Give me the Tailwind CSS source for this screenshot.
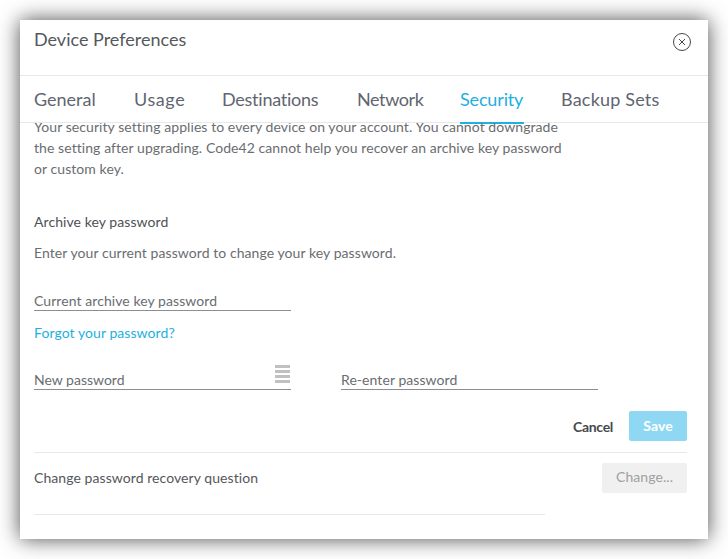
<!DOCTYPE html>
<html>
<head>
  <meta charset="UTF-8">
  <title>Device Preferences</title>
  <script src="https://cdn.jsdelivr.net/npm/@tailwindcss/browser@4"></script>
</head>
<body class="bg-white w-[728px] h-[559px] overflow-hidden font-['Lato',sans-serif] text-[#6a6d71]">
  <div class="pt-[20px] pl-[20px]">
    <div class="w-[688px] h-[519px] bg-white shadow-[0_0_20px_rgba(0,0,0,0.7)] flex flex-col overflow-hidden">

      <!-- header -->
      <div class="h-[56px] shrink-0 border-b border-[#e8e8e8] flex justify-between pl-[14px] pr-[16px] pt-[7px]">
        <h2 class="text-[18px] leading-[24px] text-[#55585c]">Device Preferences</h2>
        <svg class="mt-[5px]" width="20" height="20" viewBox="0 0 20 20" fill="none" stroke="#44474b">
          <circle cx="10" cy="10" r="8.5"/>
          <path d="M7 7l6 6M13 7l-6 6"/>
        </svg>
      </div>

      <!-- tabs -->
      <div class="h-[47px] shrink-0 border-b border-[#e8e8e8] flex gap-[37px] pl-[14px] text-[18px] text-[#5f6570] whitespace-nowrap">
        <div class="w-[63px] pt-[11px] leading-[24px]">General</div>
        <div class="w-[51px] pt-[11px] leading-[24px] tracking-[0.6px]">Usage</div>
        <div class="w-[98px] pt-[11px] leading-[24px] tracking-[-0.25px]">Destinations</div>
        <div class="w-[66px] pt-[11px] leading-[24px] tracking-[-0.4px]">Network</div>
        <div class="w-[64px] pt-[11px] leading-[24px] h-[48px] border-b-2 border-[#1eb0e0] text-[#1eb0e0] tracking-[-0.15px]">Security</div>
        <div class="w-[98px] pt-[11px] leading-[24px] tracking-[0.2px]">Backup Sets</div>
      </div>

      <!-- scrolled content -->
      <div class="flex-1 overflow-hidden pl-[14px] pr-[21px] text-[14px] tracking-[0.07px]">
        <p class="-mt-[7px] leading-[21px] whitespace-nowrap">Your security setting applies to every device on your account. You cannot downgrade<br>the setting after upgrading. Code42 cannot help you recover an archive key password<br>or custom key.</p>

        <h3 class="mt-[33px] leading-[20px] text-[#4e5155]">Archive key password</h3>
        <p class="mt-[11px] leading-[20px]">Enter your current password to change your key password.</p>

        <div class="mt-[28px] w-[257px] h-[19px] border-b border-[#8e8e8e] box-content leading-[20px]">Current archive key password</div>
        <a class="block mt-[12px] leading-[20px] text-[#1eb0e0]">Forgot your password?</a>

        <div class="mt-[26px] flex gap-[50px]">
          <div class="relative w-[257px] h-[20px] border-b border-[#8e8e8e] box-content leading-[22px] tracking-normal">
            New password
            <div class="absolute right-[1px] -top-[4px] w-[15px] flex flex-col gap-[2px]">
              <div class="h-[3px] bg-[#c0c0c0]"></div>
              <div class="h-[3px] bg-[#c0c0c0]"></div>
              <div class="h-[3px] bg-[#c0c0c0]"></div>
              <div class="h-[3px] bg-[#c0c0c0]"></div>
            </div>
          </div>
          <div class="w-[257px] h-[20px] border-b border-[#8e8e8e] box-content leading-[22px]">Re-enter password</div>
        </div>

        <div class="mt-[21px] flex justify-end items-center gap-[16px]">
          <button class="font-bold text-[#46494d] tracking-[-0.3px]">Cancel</button>
          <button class="w-[58px] h-[30px] pb-[2px] rounded-[2px] bg-[#8ed8f3] text-white font-bold">Save</button>
        </div>

        <div class="mt-[11px] border-t border-[#e8e8e8] pt-[10px] flex justify-between items-center">
          <span class="-mt-[2px] text-[#54575b]">Change password recovery question</span>
          <button class="w-[85px] h-[30px] pb-[3px] rounded-[2px] bg-[#f0f0f0] text-[#a0a0a0]">Change...</button>
        </div>

        <div class="mt-[21px] w-[511px] border-t border-[#e8e8e8]"></div>
      </div>
    </div>
  </div>
</body>
</html>
